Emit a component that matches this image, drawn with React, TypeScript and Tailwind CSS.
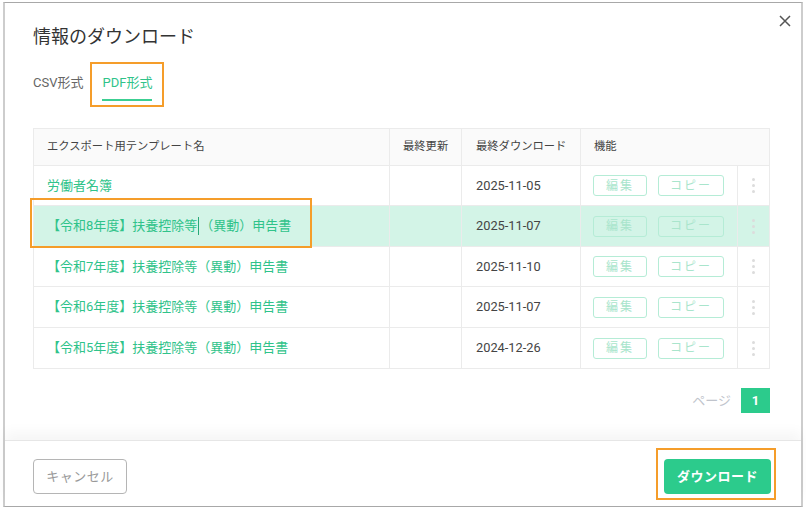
import React from "react";

const rows = [
  { name: "労働者名簿", date: "2025-11-05", active: false, h: "h-[40px]" },
  { name: "【令和8年度】扶養控除等（異動）申告書", date: "2025-11-07", active: true, h: "h-[41px]" },
  { name: "【令和7年度】扶養控除等（異動）申告書", date: "2025-11-10", active: false, h: "h-[40px]" },
  { name: "【令和6年度】扶養控除等（異動）申告書", date: "2025-11-07", active: false, h: "h-[41px]" },
  { name: "【令和5年度】扶養控除等（異動）申告書", date: "2024-12-26", active: false, h: "h-[40px]" },
];

function Dots() {
  return (
    <div className="flex flex-col items-center gap-[3px]">
      <span className="block w-[3px] h-[3px] rounded-full bg-[#dcdcdc]" />
      <span className="block w-[3px] h-[3px] rounded-full bg-[#dcdcdc]" />
      <span className="block w-[3px] h-[3px] rounded-full bg-[#dcdcdc]" />
    </div>
  );
}

export default function App() {
  return (
    <div
      className="relative w-[806px] h-[510px] bg-white overflow-hidden"
      style={{ fontFamily: "Roboto, 'Noto Sans CJK JP', 'Noto Sans', sans-serif" }}
    >
      <div className="ml-[3px] mt-[2px] w-[800px] h-[505px] border-t border-b border-t-[#a8a8a8] border-b-[#a8a8a8] border-l-2 border-r-2 border-l-[#cdcdcd] border-r-[#cdcdcd] flex flex-col relative">
        {/* close */}
        <div className="absolute right-[10px] top-[12px]">
          <svg width="12" height="12" viewBox="0 0 12 12">
            <path d="M1 1 L11 11 M11 1 L1 11" stroke="#555" strokeWidth="1.5" />
          </svg>
        </div>

        <div className="flex-1 pl-[28px] pr-[30px] pt-[21px]">
          <div className="text-[18px] leading-[26px] text-[#333]">情報のダウンロード</div>

          <div className="mt-[23px] flex text-[13px] leading-[20px]">
            <div className="pb-[6px] text-[#666]">CSV形式</div>
            <div className="ml-[19px] pb-[6px] border-b-2 border-[#3ccf92] text-[#2fc38a] w-[50px]">PDF形式</div>
          </div>

          {/* table */}
          <div className="mt-[27px] w-[737px] border border-[#ebebeb] text-[13px]">
            <div className="flex h-[37px] bg-[#fafafa] border-b border-[#ebebeb] text-[11.3px] text-[#444] items-center">
              <div className="w-[356px] pl-[13px] h-full flex items-center border-r border-[#ebebeb]">エクスポート用テンプレート名</div>
              <div className="w-[72px] pl-[13px] h-full flex items-center border-r border-[#ebebeb]">最終更新</div>
              <div className="w-[119px] pl-[14px] h-full flex items-center border-r border-[#ebebeb]">最終ダウンロード</div>
              <div className="flex-1 pl-[13px] h-full flex items-center">機能</div>
            </div>
            {rows.map((r, i) => (
              <div
                key={i}
                className={`flex ${r.h} items-center ${i < rows.length - 1 ? "border-b border-[#ebebeb]" : ""} ${r.active ? "bg-[#d3f4e7]" : ""}`}
              >
                <div className="w-[356px] pl-[13px] h-full flex items-center border-r border-[#ebebeb] text-[#2fc38a]">
                  {r.active ? (
                    <span className="flex items-center">
                      【令和8年度】扶養控除等
                      <span className="inline-block w-px h-[18px] bg-[#2aa878] mx-px" />
                      （異動）申告書
                    </span>
                  ) : (
                    r.name
                  )}
                </div>
                <div className="w-[72px] h-full border-r border-[#ebebeb]" />
                <div className="w-[119px] pl-[14px] h-full flex items-center border-r border-[#ebebeb] text-[#444] text-[12.8px]">{r.date}</div>
                <div className="w-[157px] pl-[12px] h-full flex items-center gap-[11px] border-r border-[#ebebeb]">
                  <div className="w-[54px] h-[21px] rounded-[3px] border border-[#b5ecd6] flex items-center justify-center text-[12px] tracking-[2px] text-[#a9e5cc]">編集</div>
                  <div className="w-[66px] h-[21px] rounded-[3px] border border-[#b5ecd6] flex items-center justify-center text-[12px] tracking-[2px] text-[#a9e5cc]">コピー</div>
                </div>
                <div className="flex-1 h-full flex items-center justify-center">
                  <Dots />
                </div>
              </div>
            ))}
          </div>

          <div className="mt-[19px] w-[737px] flex justify-end items-center">
            <span className="text-[13px] text-[#c0c4cc] mr-[10px]">ページ</span>
            <div className="w-[29px] h-[25px] bg-[#2ccb8c] text-white text-[13px] font-bold flex items-center justify-center">1</div>
          </div>
        </div>

        {/* footer */}
        <div className="h-[66px] border-t border-[#e6e6e6] shadow-[0_-8px_12px_rgba(0,0,0,0.04)] flex items-start justify-between pl-[28px] pr-[30px] pt-[18px]">
          <div className="w-[94px] h-[35px] rounded-[4px] border border-[#b5b5b5] flex items-center justify-center text-[13px] text-[#999] tracking-[0.5px]">キャンセル</div>
          <div className="w-[107px] h-[35px] rounded-[4px] bg-[#2ccb8c] flex items-center justify-center text-[13px] font-bold text-white tracking-[0.5px]">ダウンロード</div>
        </div>
      </div>

      {/* annotation boxes */}
      <div className="absolute left-[90px] top-[62px] w-[74px] h-[45px] border-2 border-[#f59d2a] pointer-events-none" />
      <div className="absolute left-[30px] top-[198px] w-[282px] h-[50px] border-2 border-[#f59d2a] pointer-events-none" />
      <div className="absolute left-[656px] top-[448px] w-[120px] h-[52px] border-2 border-[#f59d2a] pointer-events-none" />
    </div>
  );
}
